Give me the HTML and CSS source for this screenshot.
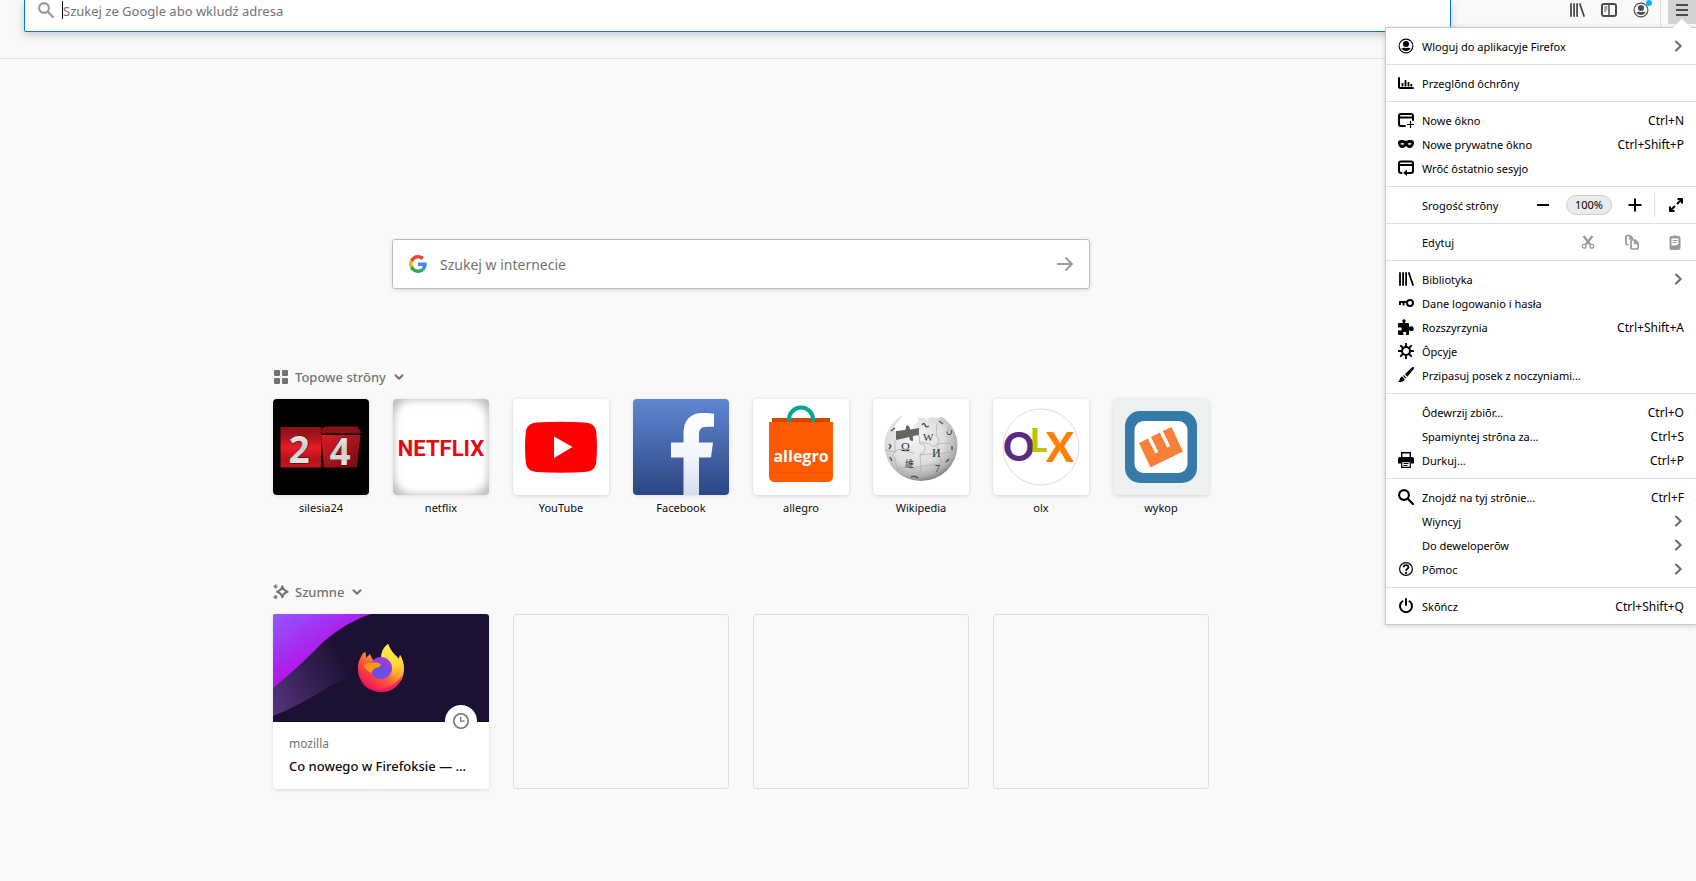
FILE: index.html
```html
<!DOCTYPE html>
<html lang="szl">
<head>
<meta charset="utf-8">
<title>Nowo karta</title>
<link rel="stylesheet" href="styles.css">
</head>
<body>
<svg class="defs" aria-hidden="true">
  <symbol id="i-search" viewBox="0 0 16 16"><circle cx="6" cy="6" r="4.9" fill="none" stroke="currentColor" stroke-width="2.1"/><path d="M9.8 9.8 15 15" stroke="currentColor" stroke-width="2.3" stroke-linecap="round"/></symbol>
  <symbol id="i-library" viewBox="0 0 16 16"><path d="M2 1.9v12.2M5.1 1.9v12.2M8.1 1.9v12.2M10.9 2l4.1 12" fill="none" stroke="currentColor" stroke-width="1.8" stroke-linecap="round"/></symbol>
  <symbol id="i-account" viewBox="0 0 16 16"><circle cx="8" cy="8" r="6.9" fill="none" stroke="currentColor" stroke-width="1.1"/><circle cx="8" cy="6.1" r="3" fill="currentColor"/><path d="M3.3 10c1 .3 2 .1 2.700-.5 1.200 1 2.800 1 4 0 .7.6 1.700.8 2.700.5C11.900 12 10.200 13 8 13S4.100 12 3.300 10z" fill="currentColor"/></symbol>
  <symbol id="i-chevron" viewBox="0 0 16 16"><path d="m6 3.500 4.700 4.500L6 12.500" fill="none" stroke="currentColor" stroke-width="2" stroke-linecap="round" stroke-linejoin="round"/></symbol>
  <symbol id="i-down" viewBox="0 0 12 12"><path d="M2.500 4.200 6 7.700l3.500-3.500" fill="none" stroke="currentColor" stroke-width="2" stroke-linecap="round" stroke-linejoin="round"/></symbol>
</svg>

<header class="toolbar">
  <div class="urlbar">
    <svg class="icon urlbar-icon"><use href="#i-search"/></svg>
    <span class="caret"></span>
    <input class="urlbar-input" type="text" aria-label="Adresa" placeholder="Szukej ze Google abo wkludź adresa">
  </div>
  <div class="tools">
    <button class="tool" aria-label="Bibliotyka"><svg class="icon"><use href="#i-library"/></svg></button>
    <button class="tool" aria-label="Posek bokowy"><svg class="icon" viewBox="0 0 16 16"><rect x="1" y="2" width="14" height="12" rx="2" fill="none" stroke="currentColor" stroke-width="2"/><path d="M8 2v12" stroke="currentColor" stroke-width="1.500"/><path d="M3.300 5h3M3.300 7h3M3.300 9h2" stroke="currentColor"/></svg></button>
    <button class="tool" aria-label="Kōnto"><svg class="icon"><use href="#i-account"/></svg><span class="badge"></span></button>
    <button class="tool menu-button" aria-label="Menu"><svg class="icon" viewBox="0 0 16 16"><path d="M2 3h12M2 8h12M2 13h12" stroke="currentColor" stroke-width="2"/></svg></button>
  </div>

  <nav class="panel" aria-label="Menu">
    <svg class="panel-arrow" viewBox="0 0 20 10"><path d="M0 10 10 0l10 10z" fill="#fff"/><path d="M0 9.500h.5L10 .5l9.500 9h.5" fill="none" stroke="#cfcfcf" stroke-width=".8"/></svg>
    <section class="group">
      <button class="item"><svg class="icon"><use href="#i-account"/></svg><span class="label">Wloguj do aplikacyje Firefox</span><svg class="icon chevron"><use href="#i-chevron"/></svg></button>
    </section>
    <section class="group">
      <button class="item"><svg class="icon" viewBox="0 0 16 16"><path d="M1 3v8.500q0 1.500 1.500 1.500H15" fill="none" stroke="currentColor" stroke-width="2" stroke-linecap="round"/><path d="M4.500 8v3.500M7.500 5v6.500M10.500 7v4.500M13.300 9v2.500" stroke="currentColor" stroke-width="1.800"/></svg><span class="label">Przeglōnd ôchrōny</span></button>
    </section>
    <section class="group">
      <button class="item"><svg class="icon" viewBox="0 0 16 16"><path d="M7 14H3q-2 0-2-2V4q0-2 2-2h10q2 0 2 2v4M1 5.500h14" fill="none" stroke="currentColor" stroke-width="2" stroke-linecap="round"/><path d="M12.500 9v7M9 12.500h7" stroke="currentColor" stroke-width="1.200"/></svg><span class="label">Nowe ôkno</span><kbd>Ctrl+N</kbd></button>
      <button class="item"><svg class="icon" viewBox="0 0 16 16"><path fill="currentColor" fill-rule="evenodd" d="M0 6.500C0 4.300 2 4 4 4c2 0 2.800.8 4 .8S10 4 12 4s4 .3 4 2.500C16 10 13.900 12 11.500 12 9.400 12 9.300 10.200 8 10.200S6.600 12 4.500 12C2.100 12 0 10 0 6.500zM2.200 8C3 9 5.200 9.200 6.300 8 5.500 6.500 3.200 6.500 2.200 8zm7.500 0c1.100 1.200 3.300 1 4.100 0-1-1.500-3.300-1.500-4.100 0z"/></svg><span class="label">Nowe prywatne ôkno</span><kbd>Ctrl+Shift+P</kbd></button>
      <button class="item"><svg class="icon" viewBox="0 0 16 16"><path d="M3.500 13Q1 13 1 11V3.500q0-2 2-2h10q2 0 2 2V11q0 2-2 2H8M1 5h14" fill="none" stroke="currentColor" stroke-width="2" stroke-linecap="round"/><path d="M5 13h5M9 9.500V16L5.200 13z" fill="currentColor"/></svg><span class="label">Wrōć ôstatnio sesyjo</span></button>
    </section>
    <section class="group">
      <div class="item controls"><span class="label">Srogość strōny</span>
        <button class="ctl minus" aria-label="Zmyńsz"><svg class="icon" viewBox="0 0 16 16"><path d="M2 8h12" stroke="currentColor" stroke-width="2"/></svg></button>
        <button class="zoom-level">100%</button>
        <button class="ctl plus" aria-label="Zwiynksz"><svg class="icon" viewBox="0 0 16 16"><path d="M1.500 8h13M8 1.500v13" stroke="currentColor" stroke-width="2"/></svg></button>
        <button class="ctl split" aria-label="Połny ekran"><svg class="icon" viewBox="0 0 16 16"><path d="m3 13 4-4M9 7l4-4M9.500 2H14v4.500M2 9.500V14h4.500" fill="none" stroke="currentColor" stroke-width="2" stroke-linejoin="round"/></svg></button>
      </div>
    </section>
    <section class="group">
      <div class="item controls muted"><span class="label">Edytuj</span>
        <button class="ctl" aria-label="Wytnij"><svg class="icon" viewBox="0 0 16 16"><path d="m3.500 2 6.700 8.500M12.500 2 5.800 10.500" stroke="currentColor" stroke-width="2.200"/><circle cx="4.200" cy="12.200" r="1.900" fill="none" stroke="currentColor" stroke-width="1.300"/><circle cx="11.800" cy="12.200" r="1.900" fill="none" stroke="currentColor" stroke-width="1.300"/></svg></button>
        <button class="ctl" aria-label="Kopiuj"><svg class="icon" viewBox="0 0 16 16"><path d="M4.500 10.500H3q-1 0-1-1V2.500q0-1 1-1h3l3 3M6 1.500V5h3" fill="none" stroke="currentColor" stroke-width="1.700"/><path d="M7 7q0-1 1-1h3l3.200 3.200V14q0 1-1 1H8q-1 0-1-1zM10.700 6v3.500h3.500" fill="none" stroke="currentColor" stroke-width="1.700"/></svg></button>
        <button class="ctl last" aria-label="Wraź"><svg class="icon" viewBox="0 0 16 16"><path d="M4.500 2h7q2 0 2 2v10q0 2-2 2h-7q-2 0-2-2V4q0-2 2-2z" fill="currentColor"/><path d="M4.500 4h7v5.500L9.500 11.500h-5z" fill="#fff"/><path d="M5 4.500V2.300h1.500a1.600 1.600 0 0 1 3 0H11v2.200z" fill="currentColor"/><path d="M5.500 6.500h5M5.500 8.500h4" stroke="currentColor"/></svg></button>
      </div>
    </section>
    <section class="group">
      <button class="item"><svg class="icon"><use href="#i-library"/></svg><span class="label">Bibliotyka</span><svg class="icon chevron"><use href="#i-chevron"/></svg></button>
      <button class="item"><svg class="icon" viewBox="0 0 16 16"><circle cx="12" cy="8" r="3" fill="none" stroke="currentColor" stroke-width="2"/><path d="M1 7h8M2 7v3M5.500 7v3.500" fill="none" stroke="currentColor" stroke-width="2"/></svg><span class="label">Dane logowanio i hasła</span></button>
      <button class="item"><svg class="icon" viewBox="0 0 16 16"><path fill="currentColor" d="M0 5q0-1 1-1h3.500c.5 0 .5-.4.2-.8C3.800 1.800 4.500.2 6 .2s2.200 1.600 1.300 3c-.3.4-.3.8.2.8H10q1 0 1 1v2.500c0 .6.400.6.800.3 1.800-1.100 4 0 4 2s-2.200 3-4 1.800c-.4-.3-.8-.2-.8.3V15q0 1-1 1H8.500c-.8 0-.8-.5-.5-1 .7-1.200 0-2.300-1.300-2.300S4.700 13.800 5.400 15c.3.500.2 1-.4 1H1q-1 0-1-1v-3.300c0-.6.4-.7 1-.4 1.500.8 2.700 0 2.700-1.400S2.500 7.700 1 8.500c-.6.300-1 .1-1-.5z"/></svg><span class="label">Rozszyrzynia</span><kbd>Ctrl+Shift+A</kbd></button>
      <button class="item"><svg class="icon" viewBox="0 0 16 16"><circle cx="8" cy="8" r="4" fill="none" stroke="currentColor" stroke-width="2"/><path d="M8 .7v3M8 12.300v3M.7 8h3M12.300 8h3M2.800 2.800 5 5M11 11l2.200 2.200M13.200 2.800 11 5M5 11l-2.200 2.200" stroke="currentColor" stroke-width="1.900" stroke-linecap="round"/></svg><span class="label">Ôpcyje</span></button>
      <button class="item"><svg class="icon" viewBox="0 0 16 16"><path fill="currentColor" d="M15.700.3c.6.600.2 1.400-.2 1.900L9.300 9.700 6.800 7.200 13.800.6c.6-.5 1.400-.8 1.900-.3zM6 8.200l2.200 2.200-.8 1-2.600-2.600zM4.200 9.600l2.400 2.500C6.600 14.500 3.500 15.600.5 15 0 14.900.2 14.500.6 14.300 2.100 13.400 1.500 10.300 4.200 9.600z"/></svg><span class="label">Przipasuj posek z noczyniami…</span></button>
    </section>
    <section class="group">
      <button class="item"><span class="label">Ôdewrzij zbiōr…</span><kbd>Ctrl+O</kbd></button>
      <button class="item"><span class="label">Spamiyntej strōna za…</span><kbd>Ctrl+S</kbd></button>
      <button class="item"><svg class="icon" viewBox="0 0 16 16"><path d="M3.700 5V.700h8.600V5" fill="none" stroke="currentColor" stroke-width="1.400"/><path d="M2 5h12q2 0 2 2v4.500h-3V9H3v2.500H0V7q0-2 2-2z" fill="currentColor"/><path d="M3.700 9.700h8.600v5.600H3.700zM5.500 11.500h5M5.500 13.500h4" fill="none" stroke="currentColor" stroke-width="1.200"/></svg><span class="label">Durkuj…</span><kbd>Ctrl+P</kbd></button>
    </section>
    <section class="group">
      <button class="item"><svg class="icon"><use href="#i-search"/></svg><span class="label">Znojdź na tyj strōnie…</span><kbd>Ctrl+F</kbd></button>
      <button class="item"><span class="label">Wiyncyj</span><svg class="icon chevron"><use href="#i-chevron"/></svg></button>
      <button class="item"><span class="label">Do deweloperōw</span><svg class="icon chevron"><use href="#i-chevron"/></svg></button>
      <button class="item"><svg class="icon" viewBox="0 0 16 16"><circle cx="8" cy="8" r="6.400" fill="none" stroke="currentColor" stroke-width="1.200"/><path d="M5.700 6.300c0-3 4.700-2.900 4.700-.1C10.400 8 8 7.900 8 9.700" fill="none" stroke="currentColor" stroke-width="1.900"/><circle cx="8" cy="11.900" r="1.100" fill="currentColor"/></svg><span class="label">Pōmoc</span><svg class="icon chevron"><use href="#i-chevron"/></svg></button>
    </section>
    <section class="group">
      <button class="item"><svg class="icon" viewBox="0 0 16 16"><path d="M4.500 3.300a6 6 0 1 0 7 0M8 1v6" fill="none" stroke="currentColor" stroke-width="2" stroke-linecap="round"/></svg><span class="label">Skōńcz</span><kbd>Ctrl+Shift+Q</kbd></button>
    </section>
  </nav>
</header>

<main class="page">
  <div class="column">
    <form class="search">
      <svg class="google" viewBox="0 0 48 48"><path fill="#ea4335" d="M24 9.500c3.540 0 6.710 1.220 9.210 3.600l6.850-6.850C35.900 2.380 30.470 0 24 0 14.620 0 6.510 5.380 2.560 13.220l7.980 6.190C12.430 13.720 17.740 9.500 24 9.500z"/><path fill="#4285f4" d="M46.980 24.550c0-1.570-.15-3.090-.38-4.550H24v9.020h12.940c-.58 2.960-2.260 5.480-4.780 7.180l7.730 6c4.510-4.180 7.090-10.360 7.090-17.650z"/><path fill="#fbbc05" d="M10.530 28.590c-.48-1.450-.76-2.990-.76-4.590s.27-3.140.76-4.590l-7.980-6.190C.92 16.460 0 20.120 0 24s.92 7.540 2.560 10.780l7.970-6.190z"/><path fill="#34a853" d="M24 48c6.480 0 11.930-2.130 15.890-5.810l-7.730-6c-2.150 1.450-4.920 2.300-8.160 2.300-6.260 0-11.570-4.220-13.470-9.910l-7.980 6.190C6.510 42.620 14.620 48 24 48z"/></svg>
      <input class="search-input" type="text" aria-label="Szukej w internecie" placeholder="Szukej w internecie">
      <button class="search-go" type="button" aria-label="Szukej"><svg class="icon" viewBox="0 0 16 16"><path d="M1 8h13M9 2l6 6-6 6" fill="none" stroke="currentColor" stroke-width="2" stroke-linecap="round" stroke-linejoin="round"/></svg></button>
    </form>

    <section class="topsites">
      <button class="heading"><svg class="icon" viewBox="0 0 16 16"><path fill="currentColor" d="M2 1h4q1 0 1 1v4q0 1-1 1H2Q1 7 1 6V2q0-1 1-1zm8 0h4q1 0 1 1v4q0 1-1 1h-4q-1 0-1-1V2q0-1 1-1zM2 9h4q1 0 1 1v4q0 1-1 1H2q-1 0-1-1v-4q0-1 1-1zm8 0h4q1 0 1 1v4q0 1-1 1h-4q-1 0-1-1v-4q0-1 1-1z"/></svg>Topowe strōny<svg class="down"><use href="#i-down"/></svg></button>
      <div class="tiles">
        <a class="site" href="#"><svg class="tile" viewBox="0 0 96 96">
          <defs><linearGradient id="red" x2="0" y2="1"><stop offset="0" stop-color="#8d1116"/><stop offset=".25" stop-color="#a8151b"/><stop offset=".5" stop-color="#ea1c26"/><stop offset=".8" stop-color="#b3141b"/><stop offset="1" stop-color="#c8161f"/></linearGradient><linearGradient id="red2" x2="1" y2="1"><stop offset="0" stop-color="#e01b25"/><stop offset=".5" stop-color="#a8131a"/><stop offset="1" stop-color="#6e0c10"/></linearGradient><linearGradient id="silver" x2="0" y2="1"><stop offset="0" stop-color="#fff"/><stop offset=".5" stop-color="#ccc"/><stop offset="1" stop-color="#f5f5f5"/></linearGradient></defs>
          <rect width="96" height="96" fill="#000"/><path d="M7.500 28H48v40.500H7.500z" fill="url(#red)"/><path d="m49 29 4-1.500h31l5 7H48z" fill="#8a1216"/><path d="M48 36h39.500L84 68.500H51z" fill="url(#red2)"/>
          <text x="26" y="64" class="numeral">2</text><text x="67" y="66" class="numeral">4</text></svg><span>silesia24</span></a>
        <a class="site" href="#"><svg class="tile" viewBox="0 0 96 96">
          <defs><filter id="soft" x="-.2" y="-.2" width="1.400" height="1.400"><feGaussianBlur stdDeviation="5"/></filter></defs>
          <rect width="96" height="96" fill="#b9bec1"/><rect x="1" y="1" width="94" height="94" rx="18" fill="#fff" filter="url(#soft)"/><rect x="8" y="7" width="80" height="82" rx="14" fill="#fff" filter="url(#soft)"/><text x="48" y="57" class="netflix">NETFLIX</text></svg><span>netflix</span></a>
        <a class="site" href="#"><svg class="tile edged" viewBox="0 0 96 96"><rect width="96" height="96" fill="#fff"/><path fill="red" d="M24 23.500Q48 22 72 23.500q9.500.5 11 8Q85 48 83 65q-1.500 7.500-11 8-24 1.500-48 0-9.500-.5-11-8-2-17 0-33.500 1.500-7.500 11-8z"/><path d="M41 37.500v21.500l18.500-11z" fill="#fff"/></svg><span>YouTube</span></a>
        <a class="site" href="#"><svg class="tile" viewBox="0 0 96 96"><defs><linearGradient id="fb" x2="0" y2="1"><stop offset="0" stop-color="#6086d2"/><stop offset="1" stop-color="#2c4683"/></linearGradient><linearGradient id="fw" x2="0" y2="1"><stop offset="0" stop-color="#fff"/><stop offset=".5" stop-color="#f4f6fc"/><stop offset="1" stop-color="#d5def1"/></linearGradient></defs><rect width="96" height="96" fill="url(#fb)"/><path fill="url(#fw)" d="M50.500 96V58.500H38v-15h12.500V34c0-13 7-20 19-20 4.500 0 8.500.3 11.500.8v13h-7c-6 0-8 2.700-8 7.700v8h14l-2 15H66V96z"/></svg><span>Facebook</span></a>
        <a class="site" href="#"><svg class="tile edged" viewBox="0 0 96 96"><rect width="96" height="96" fill="#fff"/><path d="M19 19h58v6H19z" fill="#d14900"/><path d="M16 23h64v54q0 6-6 6H22q-6 0-6-6z" fill="#ff5a00"/><path d="M16 73.500h64" stroke="#f25500"/><path d="M36 23v-2.500a12 12 0 0 1 24 0V23" fill="none" stroke="#00a790" stroke-width="4"/><text x="48" y="63" class="allegro">allegro</text></svg><span>allegro</span></a>
        <a class="site" href="#"><svg class="tile edged" viewBox="0 0 96 96"><defs><radialGradient id="globe" cx=".42" cy=".35" r=".66"><stop offset="0" stop-color="#f5f5f5"/><stop offset=".6" stop-color="#dedede"/><stop offset=".88" stop-color="#b0b0b0"/><stop offset="1" stop-color="#808080"/></radialGradient></defs><rect width="96" height="96" fill="#fff"/>
          <path fill="url(#globe)" d="M30 16l-2 1c-9 6-16.500 17-16.500 29a36.500 36 0 0 0 73 0c0-12-6-21-15-28l-5 1-7-1-4 3-3-2-6-1 1 4-5 4 1 6-14 2-7-2q2-8 6-11z"/>
          <path fill="#666" d="m23 32 9-1c2-3 0-4 2-4.500s3 2 3 4l9-1.500v7l-6 1c-1 2 1 3 0 4.500s-4 0-3.500-3.500L23 41z"/>
          <path fill="none" stroke="#aaa" stroke-width=".7" d="M22 41v12q-5 3 0 6l2 11q6 0 6 5M12 51l10 2q4-5 8-1l11 2M46 36l1 9q6 0 5 5t-5 5l1 17q-5 3 1 6M46 43l11 2q3 5 7 0l14-1M64 24l-1 13q6 3 1 9l2 12q5 3 0 7l-2 12M25 69l12-1q2 5 7 0l22-3q5 5 9 0l5-4M47 56l12-1q3-5 7 0l17-3"/>
          <path fill="none" stroke="#555" stroke-width="1.500" d="m18 32 4-3M16 45l2 2-2 3M17 58l2 4M49 26q2-3 3 0t4 1M66 22l4 3M79 47v4M38 78q4-2 7 1M76 60l-3 3"/>
          <g class="glyphs"><text x="28" y="52" font-size="12">Ω</text><text x="50" y="42" font-size="11">W</text><text x="59" y="58" font-size="12">И</text><text x="32" y="68" font-size="9">維</text><text x="62" y="73" font-size="10">7</text><text x="73" y="34" font-size="9">ن</text></g></svg><span>Wikipedia</span></a>
        <a class="site" href="#"><svg class="tile edged" viewBox="0 0 96 96"><rect width="96" height="96" fill="#fff"/><circle cx="48" cy="48" r="38" fill="none" stroke="#ddd"/><g class="olx"><text x="10" y="62" font-size="39" fill="#5b2a86">O</text><text x="37" y="53" font-size="33" fill="#c0c400">L</text><text x="53" y="63" font-size="41" fill="#ff8000">X</text></g></svg><span>olx</span></a>
        <a class="site" href="#"><svg class="tile edged" viewBox="0 0 96 96"><rect width="96" height="96" fill="#ecf0f1"/><rect x="12" y="12" width="72" height="72" rx="15" fill="#367aa9"/><rect x="21.500" y="22" width="53" height="52" rx="9" fill="#fff"/><path fill="#f98039" d="m26 44 9-4.500 7.300 15 3-1.500-7.300-15 8.800-4.500 7.400 15 3-1.500-7.400-15L58.500 28 70 52.500 37.500 68.500z"/></svg><span>wykop</span></a>
      </div>
    </section>

    <section class="highlights">
      <button class="heading"><svg class="icon" viewBox="0 0 16 16"><path d="M9.300 2.200q1 4.300 5.300 5.500-4.300 1.200-5.300 5.500Q8.300 8.900 4 7.700q4.300-1.200 5.300-5.500z" fill="none" stroke="currentColor" stroke-width="2" stroke-linejoin="round"/><path d="M2.500.5v4M.5 2.500h4M2.500 11v4M.5 13h4" stroke="currentColor" stroke-width="1.500"/></svg>Szumne<svg class="down"><use href="#i-down"/></svg></button>
      <div class="cards">
        <a class="card" href="#">
          <svg class="cover" viewBox="0 0 216 108" preserveAspectRatio="xMidYMid slice">
            <defs><linearGradient id="violet" x2=".7" y2=".8"><stop offset="0" stop-color="#9059ff"/><stop offset=".65" stop-color="#b01ae8"/><stop offset="1" stop-color="#b5119f"/></linearGradient><linearGradient id="haze" gradientUnits="userSpaceOnUse" x1="0" y1="98" x2="75" y2="55"><stop offset="0" stop-color="#54347d"/><stop offset="1" stop-color="#1d1133"/></linearGradient><linearGradient id="fox" x1=".85" y1=".1" x2=".2" y2=".95"><stop offset="0" stop-color="#fff44f"/><stop offset=".35" stop-color="#ffa930"/><stop offset=".65" stop-color="#ff4f3a"/><stop offset="1" stop-color="#e8105e"/></linearGradient><radialGradient id="orb" cx=".4" cy=".7" r=".8"><stop offset="0" stop-color="#5b55e8"/><stop offset=".5" stop-color="#7a48e0"/><stop offset="1" stop-color="#b933e1"/></radialGradient><linearGradient id="flame" x1=".5" y1="0" x2=".4" y2="1"><stop offset="0" stop-color="#fff44f"/><stop offset=".5" stop-color="#ffd63a"/><stop offset="1" stop-color="#ff8a2c" stop-opacity="0"/></linearGradient></defs>
            <rect width="216" height="108" fill="#1d1133"/><path d="M0 102V70L45 28l35-16v50Q70 66 60 70 30 90 0 102z" fill="url(#haze)"/><path d="M0 74V0h98Q75 7 50 28 25 54 0 74z" fill="url(#violet)"/>
            <path fill="url(#fox)" d="M92.500 38q.5 3 .5 6l4-4q1 3 3 6h8q0-10 7-16 3 8 9 13l2 2 1-4q4 6 4 15a23 23 0 1 1-46-2q0-7 3-11 1-4 4.500-5z"/><path fill="url(#flame)" d="M108 44q0-9 7-14 3 8 9 13l2 2 1-4q4 7 3.500 15-1.500 10-9.500 13-4-4-2-13-1-9-11-12z"/><path fill="#e5156a" opacity=".75" d="M86 66q12 14 29 7 10-4 14-12-2 15-20 17-15 0-23-12z"/>
            <circle cx="108" cy="54" r="11" fill="url(#orb)"/><path fill="#ff980e" d="M91 51q4-3 8-2 3-2 9 1 0 3-5 4-4 1-4 5l-3-1q-4-2-5-7z"/>
          </svg>
          <span class="context"><svg class="icon" viewBox="0 0 16 16"><circle cx="8" cy="8" r="7.200" fill="none" stroke="currentColor" stroke-width="1.600"/><path d="M7.700 4v4.200h3.800" fill="none" stroke="currentColor" stroke-width="1.300"/></svg></span>
          <span class="info"><span class="host">mozilla</span><span class="title">Co nowego w Firefoksie — …</span></span>
        </a>
        <div class="card empty"></div><div class="card empty"></div><div class="card empty"></div>
      </div>
    </section>
  </div>
</main>
</body>
</html>
```
FILE: styles.css
```css
* { box-sizing: border-box; }
body { margin: 0; min-height: 100vh; background: #f9f9fa; color: #0c0c0d; font: 11px/20px "Noto Sans", "Open Sans", sans-serif; }
button, input, kbd { font: inherit; color: inherit; }
button { border: 0; padding: 0; background: none; text-align: left; }
a { color: inherit; text-decoration: none; }
.defs { position: absolute; width: 0; height: 0; }
.icon { display: block; flex: none; width: 16px; height: 16px; }

/* Toolbar */
.toolbar { position: relative; display: flex; align-items: flex-start; height: 59px; padding-left: 24px; border-bottom: 1px solid #e0e0e1; background: #f9f9fa; }
.urlbar { flex: 1; display: flex; align-items: center; height: 32px; margin-right: 110px; padding: 0 13px 12px; border: 1px solid #0078d7; border-top: 0; border-radius: 0 0 2px 2px; background: #fff; box-shadow: 0 3px 10px rgba(0, 0, 0, .2); }
.urlbar-icon { color: #999; margin-right: 8px; }
.caret { width: 1px; height: 18px; background: #000; }
.urlbar-input { flex: 1; min-width: 0; height: 20px; padding: 2px 0 0; border: 0; outline: 0; background: none; font-size: 13px; }
.urlbar-input::placeholder, .search-input::placeholder { color: #737373; opacity: 1; }
.tools { display: flex; color: #4a4a4f; }
.tool { position: relative; display: flex; justify-content: center; width: 32px; height: 24px; padding-top: 2px; }
.badge { position: absolute; top: 0; right: 5px; width: 6px; height: 6px; border-radius: 50%; background: #00b3f4; }
.menu-button { width: 28px; margin-left: 11px; background: #d2d2d3; }
.menu-button::before { content: ""; position: absolute; left: -8px; top: 0; width: 1px; height: 27px; background: #dcdcdd; }

/* Application menu */
.panel { position: absolute; z-index: 2; top: 27px; right: 0; width: 311px; border: 1px solid #c8c8c9; border-right: 0; background: #fff; color: #000; box-shadow: 0 1px 5px rgba(0, 0, 0, .16); }
.panel-arrow { position: absolute; top: -10px; right: 4px; width: 20px; height: 10px; }
.group { padding: 6px 0; }
.group + .group { border-top: 1px solid #dedede; }
.item { display: flex; align-items: center; width: 100%; height: 24px; padding: 0 12px; }
.item > .label { margin-right: auto; padding-top: 2px; }
.item > .label:first-child { padding-left: 24px; }
.item > .icon + .label { padding-left: 8px; }
.item > kbd { padding-top: 2px; font-size: 12px; }
.chevron { color: #6b6b6b; margin-right: -2px; }
.controls { padding-right: 0; }
.ctl { display: flex; align-items: center; justify-content: center; width: 44px; height: 24px; }
.minus { width: 46px; }
.plus { width: 38px; margin-left: 4px; }
.split, .last { width: 42px; }
.split { border-left: 1px solid #dedede; }
.muted .ctl { color: #999; }
.zoom-level { width: 46px; height: 20px; border: 1px solid #d0d0d0; border-radius: 10px; background: #ebebeb; line-height: 18px; text-align: center; }

/* New tab page */
.page { padding: 180px 214px 40px 0; }
.column { max-width: 936px; margin: 0 auto; }
.search { display: flex; align-items: center; max-width: 698px; height: 50px; margin: 0 auto 76px; padding: 0 16px; border: 1px solid #bdbdbe; border-radius: 3px; background: #fff; box-shadow: 0 1px 4px rgba(12, 12, 13, .12); }
.google { width: 18px; height: 18px; margin-right: 13px; }
.search-input { flex: 1; min-width: 0; padding: 2px 0 0; border: 0; outline: 0; background: none; font-size: 14px; }
.search-go { color: #9b9b9c; }
.heading { display: flex; align-items: center; height: 24px; margin-bottom: 10px; color: #737373; font-size: 13px; font-weight: 500; }
.heading .icon { margin-right: 6px; }
.down { width: 12px; height: 12px; margin-left: 7px; }
.tiles, .cards { display: grid; gap: 24px; }
.tiles { grid-template-columns: repeat(8, 1fr); margin-bottom: 62px; }
.site { display: flex; flex-direction: column; gap: 3px; text-align: center; }
.tile { display: block; width: 100%; border-radius: 4px; box-shadow: 0 1px 4px rgba(12, 12, 13, .1); }
.edged { box-shadow: inset 0 0 0 1px rgba(12, 12, 13, .08), 0 1px 4px rgba(12, 12, 13, .16); }
.numeral { font: bold 37px "Open Sans", sans-serif; text-anchor: middle; fill: url(#silver); stroke: #3c0608; stroke-width: 1; paint-order: stroke; }
.netflix { font: bold 22px Roboto, sans-serif; text-anchor: middle; fill: #e50914; }
.allegro { font: bold 16px "Open Sans", sans-serif; text-anchor: middle; fill: #fff; }
.glyphs { font-family: "Liberation Serif", "Noto Sans CJK TC", "DejaVu Sans", serif; fill: #333; }
.olx { font-family: Lato, sans-serif; font-weight: 900; }
.cards { grid-template-columns: repeat(4, 1fr); }
.card { position: relative; display: flex; flex-direction: column; height: 175px; border-radius: 3px; background: #fff; box-shadow: 0 1px 4px rgba(12, 12, 13, .12); }
.empty { border: 1px solid #dededf; background: none; box-shadow: none; }
.cover { display: block; flex: none; width: 100%; height: 108px; border-radius: 3px 3px 0 0; }
.context { position: absolute; top: 91px; right: 12px; display: flex; align-items: center; justify-content: center; width: 32px; height: 32px; border-radius: 50%; background: #fff; color: #737373; }
.info { display: flex; flex-direction: column; gap: 2px; padding: 12px 16px; font-size: 12px; }
.host { color: #737373; }
.title { overflow: hidden; white-space: nowrap; font-size: 13px; font-weight: 500; }
```
